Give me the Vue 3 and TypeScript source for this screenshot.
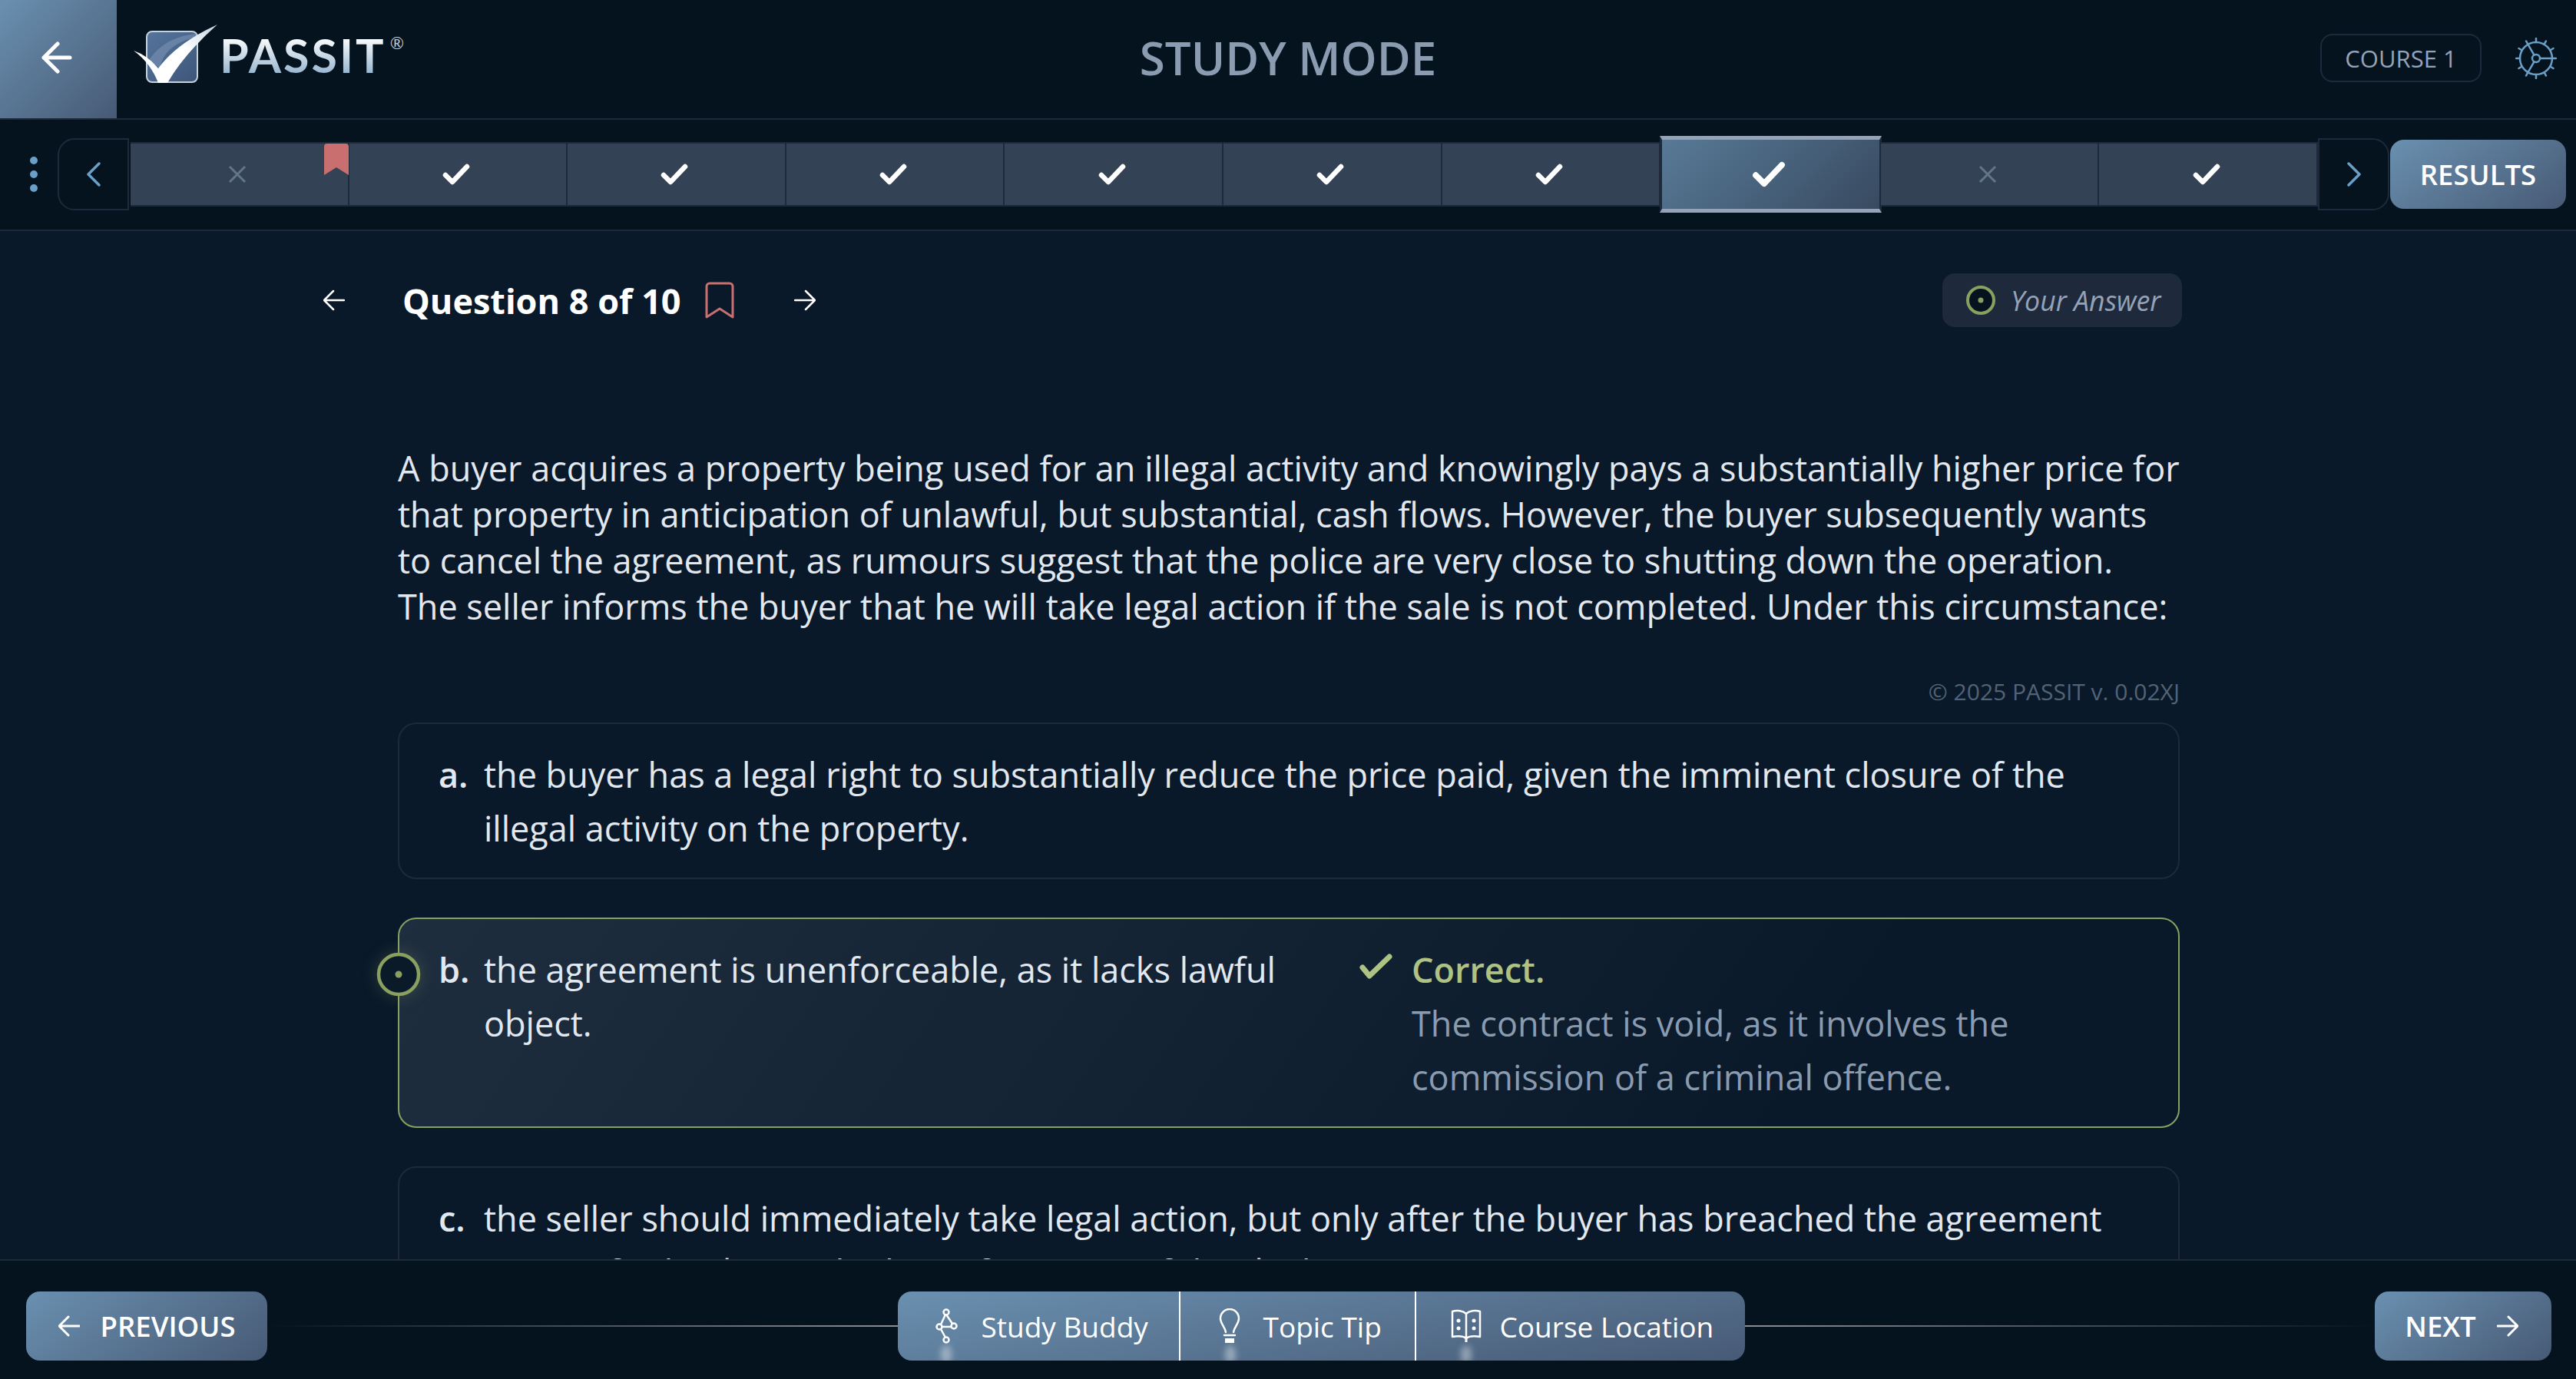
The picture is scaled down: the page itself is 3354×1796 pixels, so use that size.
<template>
  <div class="app">
    <header class="topbar">
      <div class="topbar__left">
        <button class="back-btn" type="button" aria-label="Back">
          <svg width="40" height="42" viewBox="0 0 40 42" fill="none" stroke="#fff" stroke-width="5" stroke-linecap="round" stroke-linejoin="round">
            <path d="M37 21H3M21 3 3 21l18 18" />
          </svg>
        </button>
        <div class="logo">
          <svg class="logo__mark" width="116" height="80" viewBox="0 0 116 80">
            <defs>
              <linearGradient id="boxFill" x1="0" y1="0" x2="1" y2="1">
                <stop offset="0" stop-color="#56759c" />
                <stop offset="1" stop-color="#3d5679" />
              </linearGradient>
              <linearGradient id="tickFill" x1="0" y1="1" x2="1" y2="0">
                <stop offset="0" stop-color="#fff" />
                <stop offset="0.6" stop-color="#fff" />
                <stop offset="1" stop-color="#c4d2e2" />
              </linearGradient>
            </defs>
            <rect x="21" y="11" width="66" height="66" rx="7" fill="url(#boxFill)" stroke="#c5d1de" stroke-width="2" />
            <path d="M23 50C38 26 62 16 86 14v4C62 24 44 34 38 58Z" fill="#7f98b8" opacity="0.55" />
            <path d="M4 36Q22 42 36 59 60 26 113 2 70 40 48 78H36Q26 52 4 36Z" fill="url(#tickFill)" />
          </svg>
          <span class="logo__name">PASSIT</span>
          <span class="logo__reg">®</span>
        </div>
      </div>
      <h1 class="topbar__title">STUDY MODE</h1>
      <div class="topbar__right">
        <span class="course-tag">COURSE 1</span>
        <svg class="gear" width="54" height="54" viewBox="0 0 54 54" fill="none" stroke="#6a9fc7" stroke-width="2.5" stroke-linecap="round">
          <circle cx="27" cy="27" r="21" />
          <circle cx="27" cy="27" r="5" />
          <path d="M32 27h16M24.500 31.300 16.500 45.200M24.500 22.700 16.500 8.800" />
          <path v-for="angle in gearTicks" :key="angle" d="M48 27h5" :transform="`rotate(${angle} 27 27)`" />
        </svg>
      </div>
    </header>

    <nav class="progress">
      <div class="progress__dots"><i /><i /><i /></div>
      <button class="progress__nav progress__nav--prev" type="button" aria-label="Previous page">
        <svg width="20" height="32" viewBox="0 0 20 32" fill="none" stroke="#6a9fc7" stroke-width="3.500" stroke-linecap="round" stroke-linejoin="round">
          <path d="M17 2 3 16l14 14" />
        </svg>
      </button>
      <div class="progress__tabs">
        <div
          v-for="(tab, i) in tabs"
          :key="i"
          class="tab"
          :class="{ 'tab--active': i === current }"
        >
          <svg v-if="tab.ok" class="tab__tick" width="36" height="28" viewBox="0 0 36 28" fill="none" stroke="#fff" stroke-width="6.500" stroke-linecap="round" stroke-linejoin="round">
            <path d="M4 15l9 9L32 4" />
          </svg>
          <svg v-else width="24" height="24" viewBox="0 0 24 24" fill="none" stroke="#64748b" stroke-width="3">
            <path d="M2 2l20 20M22 2 2 22" />
          </svg>
          <svg v-if="tab.marked" class="tab__mark" width="32" height="41" viewBox="0 0 32 41">
            <path d="M0 4a4 4 0 0 1 4-4h24a4 4 0 0 1 4 4v37L16 31 0 41Z" fill="#c96f6f" />
          </svg>
        </div>
      </div>
      <button class="progress__nav progress__nav--next" type="button" aria-label="Next page">
        <svg width="20" height="32" viewBox="0 0 20 32" fill="none" stroke="#6a9fc7" stroke-width="3.500" stroke-linecap="round" stroke-linejoin="round">
          <path d="M3 2l14 14L3 30" />
        </svg>
      </button>
      <button class="btn btn--results" type="button">RESULTS</button>
    </nav>

    <main class="content">
      <div class="column">
        <div class="qhead">
          <div class="qhead__left">
            <svg width="28" height="28" viewBox="0 0 28 28" fill="none" stroke="#fff" stroke-width="2.500" stroke-linecap="round" stroke-linejoin="round">
              <path d="M27 14H1M13 2 1 14l12 12" />
            </svg>
            <h2 class="qhead__title">Question 8 of 10</h2>
            <svg width="38" height="48" viewBox="0 0 38 48" fill="none" stroke="#c96f6f" stroke-width="3" stroke-linejoin="round">
              <path d="M2 6a4 4 0 0 1 4-4h26a4 4 0 0 1 4 4v40L19 35 2 46Z" />
            </svg>
            <svg width="28" height="28" viewBox="0 0 28 28" fill="none" stroke="#fff" stroke-width="2.500" stroke-linecap="round" stroke-linejoin="round">
              <path d="M1 14h26M15 2l12 12-12 12" />
            </svg>
          </div>
          <div class="your-answer">
            <svg width="40" height="40" viewBox="0 0 40 40">
              <circle cx="20" cy="20" r="17" fill="#06131f" stroke="#8aa060" stroke-width="4" />
              <circle cx="20" cy="20" r="3.500" fill="#8aa060" />
            </svg>
            <span>Your Answer</span>
          </div>
        </div>

        <p class="question">
          A buyer acquires a property being used for an illegal activity and knowingly pays a substantially higher price for that property in anticipation of unlawful, but substantial, cash flows. However, the buyer subsequently wants to cancel the agreement, as rumours suggest that the police are very close to shutting down the operation. The seller informs the buyer that he will take legal action if the sale is not completed. Under this circumstance:
        </p>
        <p class="copyright">© 2025 PASSIT v. 0.02XJ</p>

        <div class="answers">
          <div
            v-for="answer in answers"
            :key="answer.label"
            class="answer"
            :class="{ 'answer--correct': answer.correct }"
          >
            <svg v-if="answer.correct" class="answer__radio" width="60" height="60" viewBox="0 0 60 60">
              <circle cx="30" cy="30" r="26" fill="#0b1a28" stroke="#8aa060" stroke-width="4.500" />
              <circle cx="30" cy="30" r="4.500" fill="#8aa060" />
            </svg>
            <span class="answer__label">{{ answer.label }}</span>
            <span class="answer__text">{{ answer.text }}</span>
            <div v-if="answer.correct" class="answer__feedback">
              <svg class="answer__tick" width="44" height="34" viewBox="0 0 44 34" fill="none" stroke="#aec383" stroke-width="7" stroke-linecap="round" stroke-linejoin="round">
                <path d="M4 18l9 11L39 4" />
              </svg>
              <div>
                <strong>Correct.</strong>
                <p>{{ answer.feedback }}</p>
              </div>
            </div>
          </div>
        </div>
      </div>
    </main>

    <footer class="bottombar">
      <button class="btn btn--step" type="button">
        <svg width="28" height="28" viewBox="0 0 28 28" fill="none" stroke="#fff" stroke-width="3" stroke-linecap="round" stroke-linejoin="round">
          <path d="M27 14H1M13 2 1 14l12 12" />
        </svg>
        PREVIOUS
      </button>
      <span class="rule rule--left" />
      <div class="tools">
        <button class="tool tool--buddy" type="button">
          <svg width="30" height="46" viewBox="0 0 30 46" fill="none" stroke="#fff" stroke-width="2.500">
            <circle cx="14" cy="5" r="3.500" />
            <circle cx="5" cy="24" r="3.500" />
            <circle cx="24" cy="23" r="3.500" />
            <circle cx="14" cy="41" r="3.500" />
            <path d="M13 8 7 21M8 24h12.500M7 27l6 11M14 8l8 12" />
          </svg>
          <span>Study Buddy</span>
          <i class="tool__glow" />
        </button>
        <button class="tool tool--tip" type="button">
          <svg width="28" height="46" viewBox="0 0 28 46" fill="none" stroke="#fff" stroke-width="2.500" stroke-linecap="round">
            <path d="M9 31C8 24 2 20 2 13a12 12 0 0 1 24 0c0 7-6 11-7 18" />
            <path d="M7 35h14" stroke-width="2.500" />
            <path d="M8 42h12" stroke-width="6" stroke-linecap="butt" />
          </svg>
          <span>Topic Tip</span>
          <i class="tool__glow" />
        </button>
        <button class="tool tool--location" type="button">
          <svg width="40" height="44" viewBox="0 0 40 44" fill="none" stroke="#fff" stroke-width="2.500" stroke-linejoin="round">
            <path d="M20 6C16 2 8 1 2 3v33c6-1 14-1 18 2 4-3 12-3 18-2V3c-6-2-14-1-18 3Zm0 0v32" />
            <path d="M20 38v5" stroke-width="3" />
            <g fill="#fff" stroke="none">
              <circle cx="10" cy="15" r="2.500" /><circle cx="10" cy="25" r="2.500" />
              <circle cx="30" cy="15" r="2.500" /><circle cx="30" cy="25" r="2.500" />
            </g>
          </svg>
          <span>Course Location</span>
          <i class="tool__glow" />
        </button>
      </div>
      <span class="rule rule--right" />
      <button class="btn btn--step btn--next" type="button">
        NEXT
        <svg width="28" height="28" viewBox="0 0 28 28" fill="none" stroke="#fff" stroke-width="3" stroke-linecap="round" stroke-linejoin="round">
          <path d="M1 14h26M15 2l12 12-12 12" />
        </svg>
      </button>
    </footer>
  </div>
</template>

<script setup lang="ts">
interface Tab {
  ok: boolean
  marked?: boolean
}

interface Answer {
  label: string
  text: string
  correct?: boolean
  feedback?: string
}

const current = 7

const tabs: Tab[] = [
  { ok: false, marked: true },
  { ok: true },
  { ok: true },
  { ok: true },
  { ok: true },
  { ok: true },
  { ok: true },
  { ok: true },
  { ok: false },
  { ok: true },
]

const gearTicks = Array.from({ length: 12 }, (_, i) => i * 30)

const answers: Answer[] = [
  {
    label: 'a.',
    text: 'the buyer has a legal right to substantially reduce the price paid, given the imminent closure of the illegal activity on the property.',
  },
  {
    label: 'b.',
    text: 'the agreement is unenforceable, as it lacks lawful object.',
    correct: true,
    feedback: 'The contract is void, as it involves the commission of a criminal offence.',
  },
  {
    label: 'c.',
    text: 'the seller should immediately take legal action, but only after the buyer has breached the agreement terms of sale, due to the loss of revenue of the deal.',
  },
]
</script>

<style scoped>
.app {
  display: flex;
  flex-direction: column;
  height: 1796px;
  overflow: hidden;
  background: #0a1929;
  color: #fff;
  font-family: "Open Sans", sans-serif;
}

button {
  font-family: inherit;
  border: none;
  padding: 0;
  color: inherit;
  background: none;
}

.topbar {
  display: grid;
  grid-template-columns: 1fr auto 1fr;
  align-items: center;
  height: 154px;
  flex-shrink: 0;
  background: #05131f;
  border-bottom: 2px solid #1e293b;
}

.topbar__left {
  display: flex;
  align-items: center;
  height: 100%;
}

.back-btn {
  display: flex;
  align-items: center;
  justify-content: center;
  width: 152px;
  height: 154px;
  padding: 0 4px 4px 0;
  background: linear-gradient(135deg, #6a90b0, #475a75);
}

.logo {
  display: flex;
  align-items: flex-start;
  height: 80px;
  margin-left: 18px;
  margin-top: -14px;
}

.logo__name {
  margin-top: 7px;
  font-family: Lato, sans-serif;
  font-size: 61px;
  font-weight: 700;
  line-height: 70px;
  letter-spacing: 3px;
  background: linear-gradient(180deg, #fff 15%, #8fb0cc 90%);
  -webkit-background-clip: text;
  background-clip: text;
  color: transparent;
}

.logo__reg {
  margin-left: 5px;
  margin-top: 15px;
  font-family: Lato, sans-serif;
  font-size: 22px;
  line-height: 22px;
  color: #b8c8d8;
}

.topbar__title {
  margin: 0 0 4px;
  font-size: 60px;
  font-weight: 600;
  color: #8b9bb0;
}

.topbar__right {
  display: flex;
  align-items: center;
  justify-content: flex-end;
  gap: 44px;
  padding: 0 25px 3px 0;
}

.course-tag {
  display: flex;
  align-items: center;
  justify-content: center;
  box-sizing: border-box;
  width: 210px;
  height: 63px;
  border: 2px solid #1e293b;
  border-radius: 16px;
  font-size: 31px;
  color: #94a3b8;
}

.progress {
  display: flex;
  align-items: center;
  height: 141px;
  padding-bottom: 2px;
  flex-shrink: 0;
  background: #05131f;
  border-bottom: 2px solid #1e293b;
}

.progress__dots {
  display: flex;
  flex-direction: column;
  gap: 8px;
  margin-left: 39px;
  margin-right: 26px;
}

.progress__dots i {
  display: block;
  width: 10px;
  height: 10px;
  border-radius: 50%;
  background: #6a9fc7;
}

.progress__nav {
  display: flex;
  align-items: center;
  justify-content: center;
  box-sizing: border-box;
  width: 93px;
  height: 94px;
  border: 2px solid #1e293b;
  background: #05131f;
}

.progress__nav--prev {
  border-radius: 22px 0 0 22px;
  margin-right: 2px;
}

.progress__nav--next {
  border-radius: 0 22px 22px 0;
  margin-right: 1px;
}

.progress__tabs {
  display: flex;
  align-items: center;
  width: 2848px;
}

.tab {
  position: relative;
  display: flex;
  align-items: center;
  justify-content: center;
  box-sizing: border-box;
  flex: 1;
  height: 84px;
  padding-right: 4px;
  background: #344255;
  border: 2px solid #1e293b;
  border-left: none;
}

.tab--active {
  height: 100px;
  margin: 0 -1px;
  background: linear-gradient(135deg, #587a97, #384a60);
  border-top: 5px solid #94a3b8;
  border-bottom: 5px solid #94a3b8;
  border-left: 3px solid #1e293b;
  border-right: 3px solid #1e293b;
}

.tab--active .tab__tick {
  width: 44px;
  height: 34px;
}

.tab__mark {
  position: absolute;
  top: 0;
  right: -1px;
}

.btn {
  display: flex;
  align-items: center;
  justify-content: center;
  box-sizing: border-box;
  height: 90px;
  border-radius: 18px;
  background: linear-gradient(145deg, #6a90b0, #475a75);
  color: #fff;
  font-size: 36.500px;
  font-weight: 600;
}

.btn--results {
  width: 229px;
}

.btn--step {
  gap: 27px;
  width: 314px;
  flex-shrink: 0;
}

.btn--next {
  width: 230px;
  padding-right: 4px;
}

.content {
  flex: 1;
  min-height: 0;
  overflow: hidden;
}

.column {
  width: 2320px;
  margin-left: 518px;
  padding-top: 55px;
}

.qhead {
  display: flex;
  align-items: center;
  justify-content: space-between;
  height: 70px;
  margin-left: -97px;
  margin-right: -3px;
}

.qhead__left {
  display: flex;
  align-items: center;
}

.qhead__title {
  margin: 0 31px 0 75px;
  font-size: 45px;
  font-weight: 700;
}

.qhead__left svg:last-child {
  margin-left: 78px;
}

.your-answer {
  display: flex;
  align-items: center;
  gap: 19px;
  box-sizing: border-box;
  height: 70px;
  width: 312px;
  padding-left: 30px;
  border-radius: 16px;
  background: #1e293b;
  color: #94a3b8;
  font-size: 35.700px;
  font-style: italic;
}

.question {
  margin: 154px 0 0;
  font-size: 45px;
  line-height: 60px;
  color: #e2e8f0;
}

.copyright {
  margin: 61px 0 20px;
  font-size: 30px;
  line-height: 40px;
  text-align: right;
  color: #526375;
}

.answers {
  display: flex;
  flex-direction: column;
  gap: 50px;
}

.answer {
  position: relative;
  display: flex;
  box-sizing: border-box;
  padding: 31px 50px 29px 51px;
  border: 2px solid #1e293b;
  border-radius: 24px;
  font-size: 45px;
  line-height: 70px;
  color: #e2e8f0;
}

.answer--correct {
  border-color: #8aa060;
  background: linear-gradient(125deg, #1f2e3f, #0a1929 80%);
}

.answer__radio {
  position: absolute;
  left: -31px;
  top: 42px;
  filter: drop-shadow(0 0 10px rgba(138, 160, 96, 0.25));
}

.answer__label {
  flex: none;
  width: 59px;
  font-weight: 600;
}

.answer__text {
  flex: 1;
}

.answer--correct .answer__text {
  flex: none;
  width: 1040px;
}

.answer__feedback {
  position: relative;
  flex: 1;
  margin-left: 168px;
  color: #8a9bb0;
}

.answer__feedback strong {
  font-weight: 600;
  color: #aec383;
}

.answer__feedback p {
  margin: 0;
}

.answer__tick {
  position: absolute;
  left: -68px;
  top: 14px;
}

.bottombar {
  display: flex;
  align-items: center;
  height: 90px;
  flex-shrink: 0;
  padding: 40px 32px 24px 34px;
  background: #05131f;
  border-top: 2px solid #1e293b;
}

.rule {
  flex: 1;
  height: 2px;
}

.rule--left {
  background: linear-gradient(90deg, transparent, #8a8f96);
}

.rule--right {
  background: linear-gradient(90deg, #8a8f96, transparent);
}

.tools {
  display: flex;
  height: 90px;
  border-radius: 18px;
  overflow: hidden;
  background: linear-gradient(170deg, #6a90b0, #475a75);
}

.tool {
  position: relative;
  display: flex;
  align-items: center;
  box-sizing: border-box;
  height: 90px;
  font-size: 37px;
  color: #fff;
}

.tool + .tool {
  border-left: 2px solid #fff;
}

.tool--buddy {
  width: 366px;
  gap: 30px;
  padding-left: 49px;
}

.tool--tip {
  width: 307px;
  gap: 30px;
  padding-left: 50px;
}

.tool--location {
  width: 430px;
  gap: 24px;
  padding-left: 45px;
}

.tool__glow {
  position: absolute;
  bottom: -4px;
  width: 14px;
  height: 24px;
  border-radius: 50%;
  background: rgba(255, 255, 255, 0.4);
  filter: blur(4px);
}

.tool--buddy .tool__glow {
  left: 56px;
}

.tool--tip .tool__glow {
  left: 58px;
}

.tool--location .tool__glow {
  left: 58px;
}
</style>

<style>
html,
body {
  margin: 0;
  background: #05131f;
}
</style>
